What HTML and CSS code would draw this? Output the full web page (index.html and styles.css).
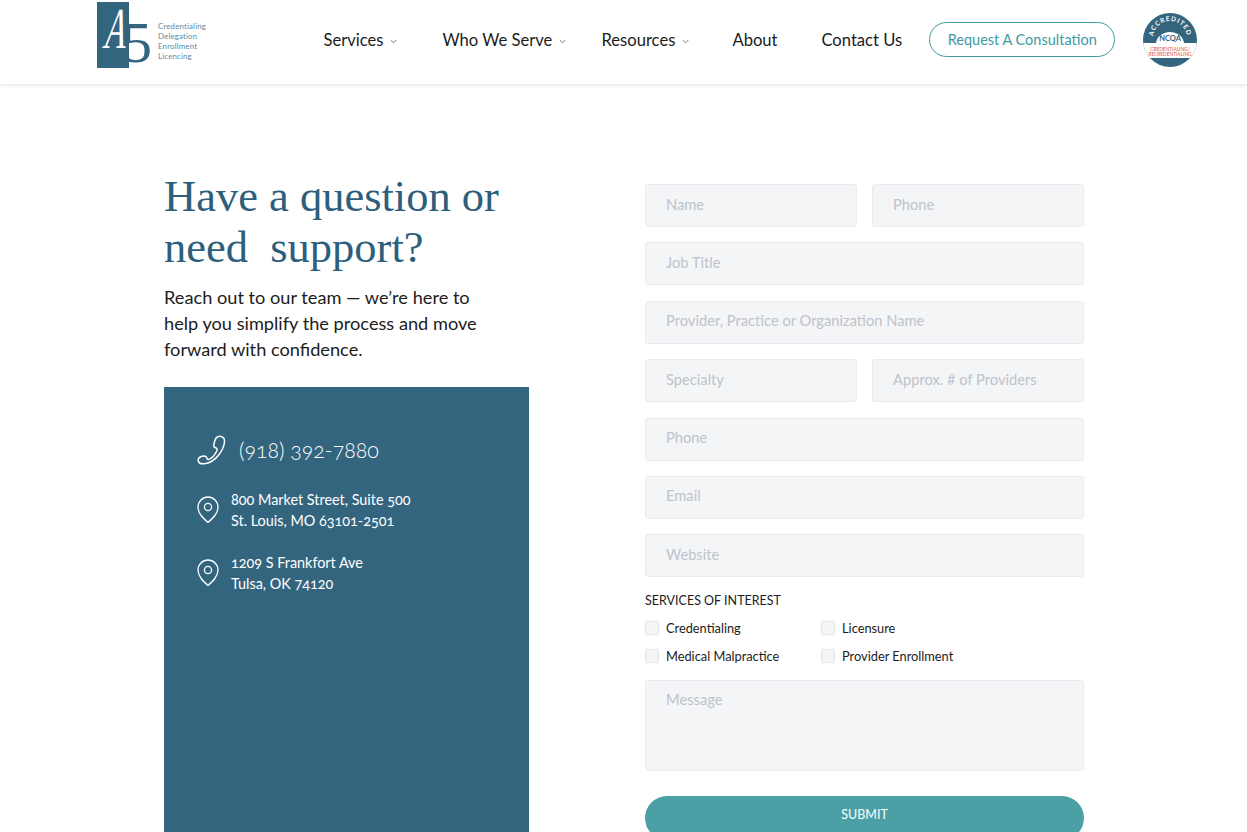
FILE: index.html
```html
<!DOCTYPE html>
<html lang="en">
<head>
    <meta charset="UTF-8">
    <meta name="viewport" content="width=device-width, initial-scale=1.0">
    <title>Contact - A5</title>
    <link rel="stylesheet" href="styles.css">
</head>
<body>

    <header class="site-header">
        <a class="logo" href="#">
            <svg class="logo-mark" width="60" height="68" viewBox="0 0 60 68">
                <rect x="0" y="0" width="32" height="66" fill="#34657f"/>
                <text class="logo-five" x="26" y="60" font-size="58">5</text>
                <text class="logo-a" transform="translate(5 46) skewX(-11) scale(.56 1)" font-size="58">A</text>
            </svg>
            <span class="logo-text">Credentialing<br>Delegation<br>Enrollment<br>Licencing</span>
        </a>

        <nav class="main-nav">
            <a class="nav-item services" href="#">Services <svg class="caret" width="7" height="5" viewBox="0 0 7 5"><path d="M.7 1l2.8 2.8L6.3 1" fill="none" stroke="#555" stroke-width=".8"/></svg></a>
            <a class="nav-item serve" href="#">Who We Serve <svg class="caret" width="7" height="5" viewBox="0 0 7 5"><path d="M.7 1l2.8 2.8L6.3 1" fill="none" stroke="#555" stroke-width=".8"/></svg></a>
            <a class="nav-item resources" href="#">Resources <svg class="caret" width="7" height="5" viewBox="0 0 7 5"><path d="M.7 1l2.8 2.8L6.3 1" fill="none" stroke="#555" stroke-width=".8"/></svg></a>
            <a class="nav-item about" href="#">About</a>
            <a class="nav-item contact" href="#">Contact Us</a>
        </nav>

        <a class="consult-btn" href="#">Request A Consultation</a>

        <svg class="badge" width="54" height="54" viewBox="0 0 54 54">
            <defs>
                <clipPath id="badgeClip"><circle cx="27" cy="27" r="27"/></clipPath>
                <path id="badgeArc" d="M10 25a17 17 0 0 1 34 0"/>
            </defs>
            <g clip-path="url(#badgeClip)">
                <rect width="54" height="54" fill="#34657f"/>
                <path d="M13 31a14 12 0 0 1 28 0z" fill="#fff"/>
                <rect y="30" width="54" height="15" fill="#fff"/>
            </g>
            <text class="badge-arc" letter-spacing=".9"><textPath href="#badgeArc" startOffset="50%" text-anchor="middle">ACCREDITED</textPath></text>
            <text class="badge-ncqa" x="27" y="28" text-anchor="middle">NCQA</text>
            <text class="badge-red" x="27" y="38" text-anchor="middle">CREDENTIALING/</text>
            <text class="badge-red" x="27" y="43" text-anchor="middle">RECREDENTIALING</text>
        </svg>
    </header>

    <main class="contact-section">
        <section class="contact-left">
            <h1>Have a question or<br>need&nbsp; support?</h1>
            <p class="intro">Reach out to our team — we’re here to<br>help you simplify the process and move<br>forward with confidence.</p>

            <div class="info-panel">
                <div class="phone-row">
                    <svg width="30" height="30" viewBox="0 0 30 30" fill="none" stroke="#fff" stroke-width="1.5" stroke-linejoin="round">
                        <path d="M21.5 1.500c2-.6 5 .4 5.700 2.600 1 3.200-.7 9.600-4.700 14.900-4 5.300-9.500 9.300-15.500 9.800-3 .3-5.300-.8-5.700-2.800-.3-1.700.2-3.200 1.500-3.800 2-.9 5-1.300 6.200-.6.800.5.900 1.800 1.300 2.500.4.600 1.200.6 2.200.1 2.500-1.300 5.500-4.700 7-7.700.7-1.500.9-2.600.1-3.200-.8-.6-2.300-.8-2.700-1.700-.5-1.300.5-4.500 1.100-6.300.5-1.500 1.400-3.400 3.500-3.800z"/>
                    </svg>
                    <span>(918) 392-7880</span>
                </div>
                <div class="address-row">
                    <svg width="22" height="28" viewBox="0 0 22 28" fill="none" stroke="#fff" stroke-width="1.3">
                        <path d="M11 26.500C6 22 1 17.500 1 11a10 10 0 0 1 20 0c0 6.500-5 11-10 15.500z"/>
                        <circle cx="11" cy="11" r="3.600"/>
                    </svg>
                    <p>800 Market Street, Suite 500<br>St. Louis, MO 63101-2501</p>
                </div>
                <div class="address-row">
                    <svg width="22" height="28" viewBox="0 0 22 28" fill="none" stroke="#fff" stroke-width="1.3">
                        <path d="M11 26.500C6 22 1 17.500 1 11a10 10 0 0 1 20 0c0 6.500-5 11-10 15.500z"/>
                        <circle cx="11" cy="11" r="3.600"/>
                    </svg>
                    <p>1209 S Frankfort Ave<br>Tulsa, OK 74120</p>
                </div>
            </div>
        </section>

        <form class="contact-form">
            <div class="form-row">
                <input type="text" placeholder="Name">
                <input type="text" placeholder="Phone">
            </div>
            <input type="text" placeholder="Job Title">
            <input type="text" placeholder="Provider, Practice or Organization Name">
            <div class="form-row">
                <input type="text" placeholder="Specialty">
                <input type="text" placeholder="Approx. # of Providers">
            </div>
            <input type="text" placeholder="Phone">
            <input type="text" placeholder="Email">
            <input type="text" placeholder="Website">

            <fieldset class="services-field">
                <legend>SERVICES OF INTEREST</legend>
                <div class="check-grid">
                    <label><input type="checkbox"><span>Credentialing</span></label>
                    <label><input type="checkbox"><span>Licensure</span></label>
                    <label><input type="checkbox"><span>Medical Malpractice</span></label>
                    <label><input type="checkbox"><span>Provider Enrollment</span></label>
                </div>
            </fieldset>

            <textarea placeholder="Message"></textarea>
            <button type="button">SUBMIT</button>
        </form>
    </main>

</body>
</html>
```

FILE: styles.css
```css
* {
    box-sizing: border-box;
}

html, body {
    height: 100%;
    overflow: hidden;
}

body {
    margin: 0;
    background-color: #ffffff;
    color: #1c1c1c;
    font-family: Lato, 'Open Sans', sans-serif;
}

a {
    color: inherit;
    text-decoration: none;
}

.site-header {
    display: flex;
    align-items: center;
    height: 84px;
    padding: 0 50px 6px 97px;
    background-color: #ffffff;
    box-shadow: 0 1px 4px rgba(0, 0, 0, 0.12);
}

.logo {
    display: flex;
    align-items: center;
    width: 227px;
}

.logo-mark {
    flex: none;
    margin-top: -6px;
    margin-right: 1px;
}

.logo-a {
    fill: #ffffff;
    font-family: 'Liberation Serif', serif;
}

.logo-five {
    fill: #34657f;
    font-family: 'Liberation Serif', serif;
}

.logo-text {
    margin-top: 4px;
    color: #5d8aa3;
    font-size: 7.800px;
    line-height: 10px;
    letter-spacing: 0.2px;
}

.main-nav {
    display: flex;
    align-items: center;
    padding-top: 2px;
    font-size: 16.600px;
}

.nav-item {
    white-space: nowrap;
}

.services {
    width: 119px;
}

.serve {
    width: 159px;
}

.resources {
    width: 131px;
}

.about {
    width: 89px;
}

.contact {
    width: 108px;
}

.caret {
    margin-left: 2px;
    vertical-align: 2px;
}

.consult-btn {
    display: flex;
    align-items: center;
    justify-content: center;
    width: 186px;
    height: 35px;
    border: 1px solid #3f9b9f;
    border-radius: 18px;
    color: #3f9b9f;
    font-size: 14.500px;
}

.badge {
    flex: none;
    margin-left: 28px;
    margin-top: 2px;
}

.badge-arc {
    fill: #ffffff;
    font-size: 6.500px;
    font-weight: 700;
    font-family: Lato, sans-serif;
}

.badge-ncqa {
    fill: #34657f;
    font-size: 7.500px;
    font-weight: 700;
    font-family: Lato, sans-serif;
}

.badge-red {
    fill: #e0533f;
    font-size: 4.800px;
    font-family: Lato, sans-serif;
}

.contact-section {
    display: flex;
    padding: 84px 0 0 164px;
}

.contact-left {
    width: 481px;
}

h1 {
    margin: 3px 0 0;
    color: #2d5f7d;
    font-family: 'Liberation Serif', serif;
    font-size: 44.500px;
    font-weight: 400;
    line-height: 51px;
}

.intro {
    margin: 11px 0 0;
    font-size: 18.200px;
    line-height: 26px;
}

.info-panel {
    width: 365px;
    height: 460px;
    margin-top: 25px;
    padding: 48px 33px;
    background-color: #34657f;
    color: #ffffff;
    font-variant-numeric: oldstyle-nums;
}

.phone-row {
    display: flex;
    align-items: center;
    gap: 12px;
    margin-bottom: 24px;
    font-size: 21.300px;
    font-weight: 300;
}

.address-row {
    display: flex;
    align-items: center;
    gap: 12px;
    margin-bottom: 21px;
    font-size: 14.400px;
    line-height: 21px;
}

.address-row p {
    margin: 0;
}

.contact-form {
    display: flex;
    flex-direction: column;
    gap: 15.400px;
    width: 439px;
    padding-top: 16px;
}

.form-row {
    display: flex;
    gap: 15px;
}

input[type="text"], textarea {
    width: 100%;
    height: 43px;
    padding: 0 20px 4px;
    border: 1px solid #e9ebee;
    border-radius: 3px;
    background-color: #f4f5f7;
    font-family: inherit;
    font-size: 14.700px;
}

input::placeholder, textarea::placeholder {
    color: #bdc3cb;
    opacity: 1;
}

.services-field {
    margin: 0;
    padding: 0;
    border: none;
}

.services-field legend {
    padding: 0;
    font-size: 12.500px;
    line-height: 16px;
}

.check-grid {
    display: grid;
    grid-template-columns: 176px 1fr;
    row-gap: 9px;
    margin-top: 10px;
}

.check-grid label {
    display: flex;
    align-items: center;
    gap: 7px;
    height: 19px;
    font-size: 12.800px;
}

.check-grid input {
    appearance: none;
    width: 14px;
    height: 14px;
    margin: 0;
    border: 1px solid #e4e6ea;
    border-radius: 2px;
    background-color: #f4f5f7;
}

textarea {
    display: block;
    height: 91px;
    padding-top: 9px;
    margin-top: -1px;
    resize: none;
}

button {
    flex: none;
    height: 44px;
    margin-top: 9px;
    padding: 0 0 6px;
    border: none;
    border-radius: 22px;
    background-color: #4aa0a4;
    color: #ffffff;
    font-family: inherit;
    font-size: 12.500px;
}
```
